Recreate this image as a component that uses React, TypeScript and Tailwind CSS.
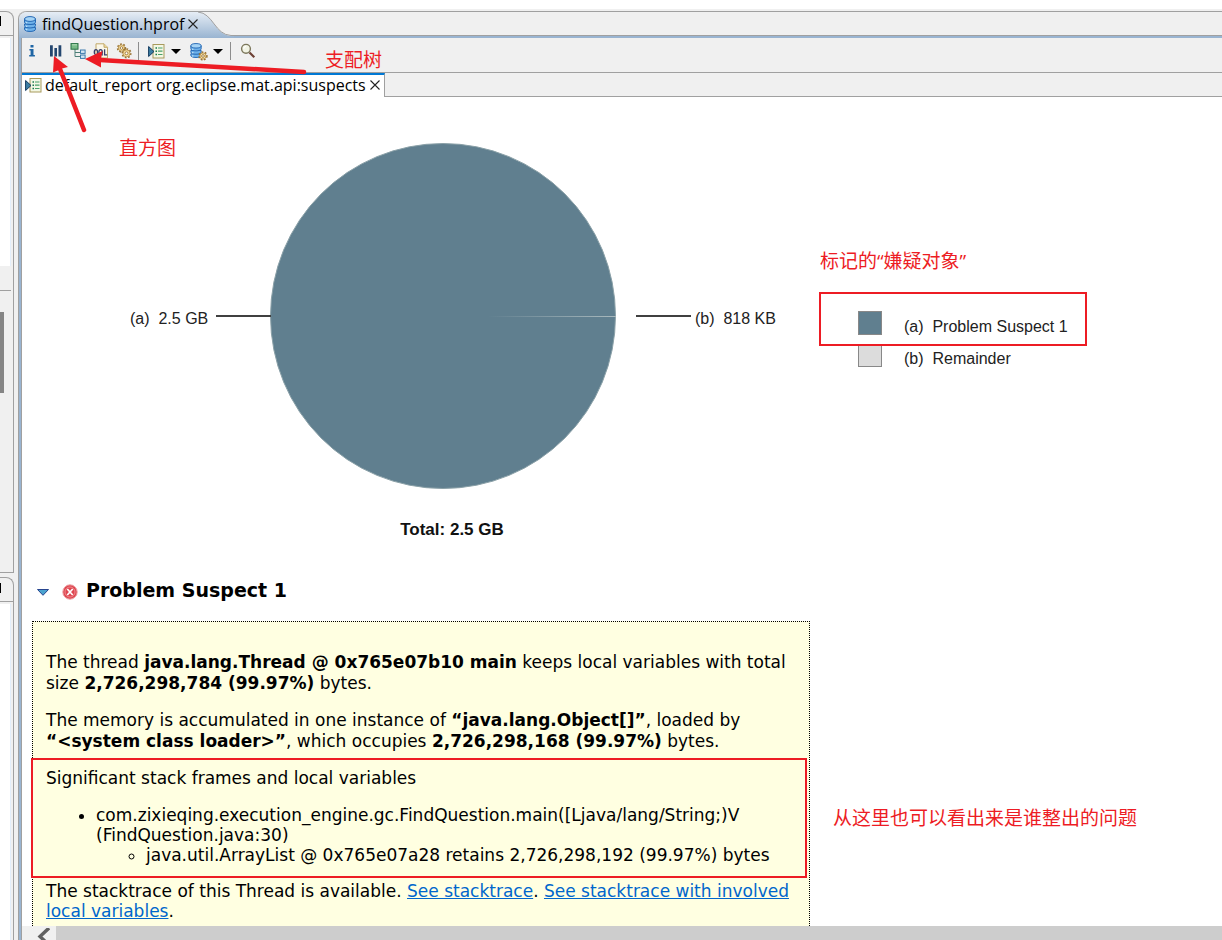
import React from "react";

function DatabaseIcon({ className }: { className: string }) {
  return (
    <svg viewBox="0 0 12 16" className={className} aria-hidden="true">
      <path d="M.5 11.500v1.700c0 3 11 3 11 0v-1.700z" fill="#6fb2ea" stroke="#2468b4" />
      <path d="M.5 8v1.700c0 3 11 3 11 0V8z" fill="#6fb2ea" stroke="#2468b4" />
      <path d="M.5 3v3.200c0 3 11 3 11 0V3z" fill="#6fb2ea" stroke="#2468b4" />
      <path d="M2.500 6.200v1M2.500 9.800v1M2.500 13.300v1" stroke="#d6eefc" strokeWidth="1.500" />
      <ellipse cx="6" cy="3" rx="5.5" ry="2.4" fill="#a5d3f5" stroke="#2468b4" />
    </svg>
  );
}

function ReportIcon() {
  return (
    <svg viewBox="0 0 17 15" className="h-[15px] w-[17px] shrink-0" aria-hidden="true">
      <rect x="5" y=".5" width="11" height="13.5" fill="#f3f7e4" stroke="#a89a5c" />
      <path d="M7.500 4h1.500M7.500 7.200H9M7.500 10.500H9" stroke="#187a4c" strokeWidth="1.4" />
      <path d="M10 4h4.500M10 7.200h4.500M10 10.500h4.500" stroke="#4aa06a" strokeWidth="1.200" />
      <path d="M.6 2.5v10L6 7.5z" fill="#3c7ea3" stroke="#12385d" />
    </svg>
  );
}

function InfoIcon() {
  return (
    <svg viewBox="0 0 16 16" className="size-4" aria-hidden="true">
      <path d="M6.500 2h3v2.600h-3zM5.400 6h4.100v6h1.400v1.500H5.200V12h1.400V7.500H5.400z" fill="#1f66a5" />
    </svg>
  );
}

function HistogramIcon() {
  return (
    <svg viewBox="0 0 16 16" className="size-4" aria-hidden="true">
      <path d="M3 2.200h2.800v11.400H3zM7.400 5H10v8.600H7.400zM11.500 2.200h2.800v11.400h-2.800z" fill="#24466f" />
    </svg>
  );
}

function TreeIcon() {
  return (
    <svg viewBox="0 0 16 16" className="size-4" aria-hidden="true">
      <path d="M5 6v7.5h5M5 9.5h5" fill="none" stroke="#4c7f78" />
      <rect x="1" y=".6" width="7" height="5.6" fill="#79bb87" stroke="#277043" />
      <path d="M2 1.8h5" stroke="#b5dfb8" />
      <rect x="10.5" y="7" width="4.6" height="3.4" fill="#d4e6f4" stroke="#3c7bad" />
      <rect x="10.5" y="12" width="4.6" height="3.4" fill="#d4e6f4" stroke="#3c7bad" />
    </svg>
  );
}

function QueryIcon() {
  return (
    <svg viewBox="0 0 16 16" className="size-4" aria-hidden="true">
      <path d="M3 .8h8l3.5 3.5V15H3z" fill="#fbf7e8" stroke="#c1a869" />
      <path d="M11 .8v3.5h3.5" fill="#ecd9a0" stroke="#c1a869" />
      <ellipse cx="3" cy="9.2" rx="1.7" ry="2.5" fill="none" stroke="#383f6a" strokeWidth="1.3" />
      <ellipse cx="7.6" cy="9.2" rx="1.7" ry="2.5" fill="none" stroke="#383f6a" strokeWidth="1.3" />
      <path d="M8 10.4l1.6 2M11.6 6.2v5.6h2.6" fill="none" stroke="#383f6a" strokeWidth="1.3" />
    </svg>
  );
}

function GearShape({ cx, cy, r }: { cx: number; cy: number; r: number }) {
  return (
    <g>
      <circle cx={cx} cy={cy} r={r} fill="none" stroke="#9a7434" strokeWidth="1.8" strokeDasharray="1.700 1.500" />
      <circle cx={cx} cy={cy} r={r - 0.7} fill="#f8dfa0" stroke="#b08a45" strokeWidth=".8" />
      <circle cx={cx} cy={cy} r={r * 0.35} fill="#fff" stroke="#8f6724" strokeWidth=".8" />
    </g>
  );
}

function GearsIcon() {
  return (
    <svg viewBox="0 0 16 16" className="size-4" aria-hidden="true">
      <GearShape cx={5.5} cy={5} r={3.8} />
      <GearShape cx={10.5} cy={10.3} r={4.2} />
    </svg>
  );
}

function HeapQueryIcon() {
  return (
    <span className="relative block size-4">
      <DatabaseIcon className="h-[15px] w-3" />
      <svg viewBox="0 0 10 10" className="absolute -right-0.5 -bottom-0.5 size-[10px]" aria-hidden="true">
        <GearShape cx={5} cy={5} r={3.8} />
      </svg>
    </span>
  );
}

function SearchIcon() {
  return (
    <svg viewBox="0 0 16 16" className="size-4" aria-hidden="true">
      <path d="M9.5 9.5l4.8 4.8" stroke="#6d4034" strokeWidth="2.2" />
      <circle cx="6" cy="5.8" r="4.4" fill="#f1f3e4" stroke="#7c775c" strokeWidth="1.4" />
      <path d="M3.8 5.8A2.2 2.2 0 0 1 6 3.5" fill="none" stroke="#fff" strokeWidth="1.2" />
    </svg>
  );
}

function CloseIcon() {
  return (
    <svg viewBox="0 0 10 10" className="size-[10px]" aria-hidden="true">
      <path d="M.5.5l9 9M9.5.5l-9 9" stroke="#222" strokeWidth="1.1" />
    </svg>
  );
}

function ToolButton({ label, children }: { label: string; children: React.ReactNode }) {
  return (
    <button type="button" aria-label={label} className="flex h-6 w-[23px] shrink-0 items-center pl-[2px]">
      {children}
    </button>
  );
}

function MenuArrow({ label }: { label: string }) {
  return (
    <button type="button" aria-label={label} className="flex h-6 w-[14px] shrink-0 items-center justify-center">
      <svg viewBox="0 0 10 5" className="h-[5px] w-[10px]" aria-hidden="true">
        <path d="M0 0h10L5 5z" fill="#000" />
      </svg>
    </button>
  );
}

function Separator() {
  return <span className="h-[18px] w-px shrink-0 bg-[#8d8d8d]" />;
}

function SidePanels() {
  return (
    <aside className="flex w-[14px] shrink-0 flex-col gap-1">
      <div className="flex h-[562px] flex-col overflow-hidden rounded-tr-lg border-t border-r border-b border-[#a0a0a0]">
        <div className="h-6 border-b border-[#a0a0a0] pt-1">
          <div className="h-[10px] w-px bg-black" />
        </div>
        <div className="mt-[2px] mr-[2px] h-[228px] border-r border-[#e3eefa] bg-white" />
        <div className="mr-[2px] h-[25px] border-b border-[#a0a0a0]" />
        <div className="mt-[21px] h-[81px] w-1 bg-[#858585]" />
      </div>
      <div className="flex grow flex-col overflow-hidden rounded-tr-lg border-t border-r border-[#a0a0a0]">
        <div className="h-6 border-b border-[#a0a0a0] pt-[5px]">
          <div className="h-[10px] w-px bg-black" />
        </div>
        <div className="mt-[2px] mr-[2px] grow border-r border-[#e3eefa] bg-white" />
      </div>
    </aside>
  );
}

function EditorTab() {
  return (
    <div className="flex h-[27px] shrink-0 rounded-tl-lg border-t border-[#a0a0a0]">
      <div className="flex h-full items-center rounded-tl-lg bg-linear-to-b from-[#e6edf5] to-[#99b4d1] pb-[2px] pl-[5px]">
        <DatabaseIcon className="h-4 w-3" />
        <span className="pl-[6px] font-['Open_Sans',sans-serif] text-[16px] leading-5 text-black">findQuestion.hprof</span>
        <button type="button" aria-label="Close findQuestion.hprof" className="pl-1">
          <CloseIcon />
        </button>
      </div>
      <div className="relative grow">
        <svg viewBox="0 0 36 26" className="block h-[26px] w-9" aria-hidden="true">
          <defs>
            <linearGradient id="tab" x1="0" y1="0" x2="0" y2="1">
              <stop offset="0" stopColor="#e6edf5" />
              <stop offset="1" stopColor="#99b4d1" />
            </linearGradient>
          </defs>
          <path d="M0 0C15 1 17 23 33 24H36V26H0z" fill="url(#tab)" />
          <path d="M0 0C15 1 17 23 33 23.5H36" fill="none" stroke="#a0a0a0" />
        </svg>
        <div className="absolute right-0 bottom-0 left-9 h-[3px] border-t border-[#a0a0a0] bg-[#99b4d1]" />
      </div>
    </div>
  );
}

function Toolbar() {
  return (
    <div className="flex h-[34px] shrink-0 items-start bg-[#f0f0f0] pt-px" role="toolbar">
      <ToolButton label="Overview"><InfoIcon /></ToolButton>
      <ToolButton label="Histogram"><HistogramIcon /></ToolButton>
      <ToolButton label="Dominator tree"><TreeIcon /></ToolButton>
      <ToolButton label="Object query"><QueryIcon /></ToolButton>
      <ToolButton label="Thread overview"><GearsIcon /></ToolButton>
      <div className="ml-px flex h-6 items-center gap-[5px]">
        <Separator />
        <div className="flex pl-[2px]">
          <ToolButton label="Run report"><ReportIcon /></ToolButton>
          <MenuArrow label="Report menu" />
        </div>
        <div className="flex">
          <ToolButton label="Query browser"><HeapQueryIcon /></ToolButton>
          <MenuArrow label="Query menu" />
        </div>
        <Separator />
        <div className="pl-[2px]">
          <ToolButton label="Search"><SearchIcon /></ToolButton>
        </div>
      </div>
    </div>
  );
}

function ReportTab() {
  return (
    <div className="flex h-[25px] shrink-0 border-t border-[#a0a0a0] bg-[#f0f0f0]">
      <div className="flex items-center border-t-2 border-r border-t-[#0078d4] border-r-[#a0a0a0] bg-white pr-1 pb-[2px] pl-[3px]">
        <ReportIcon />
        <span className="pl-[3px] font-['Open_Sans',sans-serif] text-[16px] leading-5 text-black">
          default_report org.eclipse.mat.api:suspects
        </span>
        <button type="button" aria-label="Close report" className="pl-1">
          <CloseIcon />
        </button>
      </div>
      <div className="grow border-b border-[#a0a0a0]" />
    </div>
  );
}

function PieChart() {
  return (
    <svg
      viewBox="0 0 790 460"
      className="h-[460px] w-[790px] shrink-0 font-['Liberation_Sans',sans-serif]"
      role="img"
      aria-label="Memory by suspect"
    >
      <defs>
        <linearGradient id="slice" x1="0" x2="1">
          <stop offset="0" stopColor="#607f8f" />
          <stop offset="1" stopColor="#a9b9bd" />
        </linearGradient>
      </defs>
      <circle cx="421" cy="219" r="172.500" fill="#607f8f" stroke="#8ba1a8" />
      <rect x="466" y="219" width="128" height="1" fill="url(#slice)" />
      <path d="M194 219H249M614 219H669" stroke="#404040" strokeWidth="2" />
      <text x="108" y="227" fontSize="16" fill="#222" xmlSpace="preserve">(a)  2.5 GB</text>
      <text x="673" y="227" fontSize="16" fill="#222" xmlSpace="preserve">(b)  818 KB</text>
      <text x="430" y="438" fontSize="17" fontWeight="700" fill="#111" textAnchor="middle">Total: 2.5 GB</text>
    </svg>
  );
}

function Legend() {
  return (
    <ul className="flex flex-col gap-[10px] pt-[214px] pl-[46px] font-['Liberation_Sans',sans-serif] text-[16px] leading-5 text-[#222]">
      <li className="flex h-6 gap-[22px]">
        <span className="size-6 border border-[#888] bg-[#607f8f]" />
        <span className="pt-[6px] whitespace-pre">(a)  Problem Suspect 1</span>
      </li>
      <li className="flex h-6 gap-[22px]">
        <span className="h-[22px] w-6 border border-[#888] bg-[#dcdcdc]" />
        <span className="pt-1 whitespace-pre">(b)  Remainder</span>
      </li>
    </ul>
  );
}

function SuspectDetails() {
  return (
    <section className="pl-[10px]">
      <h2 className="flex h-[26px] items-center pl-[5px] text-[19px] leading-[26px] font-bold text-black">
        <svg viewBox="0 0 12 7" className="mt-1 h-[7px] w-3" aria-hidden="true">
          <path d="M.5.5h11L6 6.3z" fill="#4aa3cf" stroke="#28458f" />
        </svg>
        <svg viewBox="0 0 16 16" className="mt-[3px] ml-[13px] size-4" aria-hidden="true">
          <circle cx="8" cy="8" r="7.2" fill="#df4650" stroke="#eda3a5" />
          <circle cx="8" cy="8" r="5" fill="none" stroke="#f09a9c" strokeWidth=".8" />
          <path d="M5.300 5l5.400 6M10.700 5l-5.400 6" stroke="#fff" strokeWidth="1.700" />
        </svg>
        <span className="pl-2">Problem Suspect 1</span>
      </h2>
      <div className="mt-[18px] flex w-[778px] flex-col gap-4 border border-dotted border-black bg-[#ffffe1] pt-[30px] pb-6 pl-[13px] text-[17px] leading-[21px] whitespace-nowrap text-black">
        <p>
          The thread <b>java.lang.Thread @ 0x765e07b10 main</b> keeps local variables with total
          <br />
          size <b>2,726,298,784 (99.97%)</b> bytes.
        </p>
        <p>
          The memory is accumulated in one instance of <b>“java.lang.Object[]”</b>, loaded by
          <br />
          <b>“&lt;system class loader&gt;”</b>, which occupies <b>2,726,298,168 (99.97%)</b> bytes.
        </p>
        <p>Significant stack frames and local variables</p>
        <ul className="list-disc pl-[50px] leading-5">
          <li>
            com.zixieqing.execution_engine.gc.FindQuestion.main([Ljava/lang/String;)V
            <br />
            (FindQuestion.java:30)
            <ul className="list-[circle] pl-[50px]">
              <li>java.util.ArrayList @ 0x765e07a28 retains 2,726,298,192 (99.97%) bytes</li>
            </ul>
          </li>
        </ul>
        <p className="leading-5">
          The stacktrace of this Thread is available.{" "}
          <a href="#stacktrace" className="text-[#0066cc] underline">See stacktrace</a>.{" "}
          <a href="#stacktrace-locals" className="text-[#0066cc] underline">
            See stacktrace with involved
            <br />
            local variables
          </a>
          .
        </p>
      </div>
    </section>
  );
}

function HorizontalScrollbar() {
  return (
    <div className="flex h-[14px] shrink-0 overflow-hidden bg-[#cdcdcd]">
      <button type="button" aria-label="Scroll left" className="flex w-[34px] items-start justify-end bg-[#f0f0f0] pt-[2px] pr-[6px]">
        <svg viewBox="0 0 13 18" className="h-[18px] w-[13px]" aria-hidden="true">
          <path d="M12 0L3 8.5 12 17" fill="none" stroke="#606060" strokeWidth="3.4" />
        </svg>
      </button>
    </div>
  );
}

const note = "absolute text-[19px] leading-7 whitespace-nowrap";

function Annotations() {
  return (
    <div className="pointer-events-none absolute inset-0 font-['Open_Sans','Noto_Sans_CJK_SC',sans-serif] text-[#ed1c24]">
      <svg viewBox="0 0 320 140" className="absolute top-0 left-0 h-[140px] w-80" aria-hidden="true">
        <path d="M84 130L60 69M304 72L100 60" stroke="#ed1c24" strokeWidth="4.5" strokeLinecap="round" />
        <path d="M54 56l14 11-6 1.500-3 1.500-6 2.500z" fill="#ed1c24" />
        <path d="M85 59l17.500-8-1.500 8v8.500z" fill="#ed1c24" />
      </svg>
      <span className={`${note} top-[46px] left-[325px]`}>支配树</span>
      <span className={`${note} top-[134px] left-[119px]`}>直方图</span>
      <span className={`${note} top-[247px] left-[820px]`}>标记的“嫌疑对象”</span>
      <span className={`${note} top-[804px] left-[833px]`}>从这里也可以看出来是谁整出的问题</span>
      <div className="absolute top-[292px] left-[819px] h-[54px] w-[268px] border-2 border-[#ed1c24]" />
      <div className="absolute top-[758px] left-[31px] h-[120px] w-[776px] border-2 border-[#ed1c24]" />
    </div>
  );
}

export default function App() {
  return (
    <div className="relative flex h-screen flex-col overflow-hidden bg-[#f0f0f0]">
      <div className="h-[9px] shrink-0 bg-white" />
      <div className="flex min-h-0 grow gap-1 pt-[2px]">
        <SidePanels />
        <main className="flex min-w-0 grow flex-col rounded-tl-lg border-l border-[#a0a0a0]">
          <EditorTab />
          <div className="flex min-h-0 grow flex-col border-l-2 border-[#99b4d1]">
            <div className="flex min-h-0 grow flex-col border-l border-[#a0a0a0] bg-white">
              <Toolbar />
              <ReportTab />
              <div className="min-h-0 grow overflow-hidden font-['DejaVu_Sans',sans-serif]">
                <div className="flex h-[480px]">
                  <PieChart />
                  <Legend />
                </div>
                <SuspectDetails />
              </div>
              <HorizontalScrollbar />
            </div>
          </div>
        </main>
      </div>
      <Annotations />
    </div>
  );
}
